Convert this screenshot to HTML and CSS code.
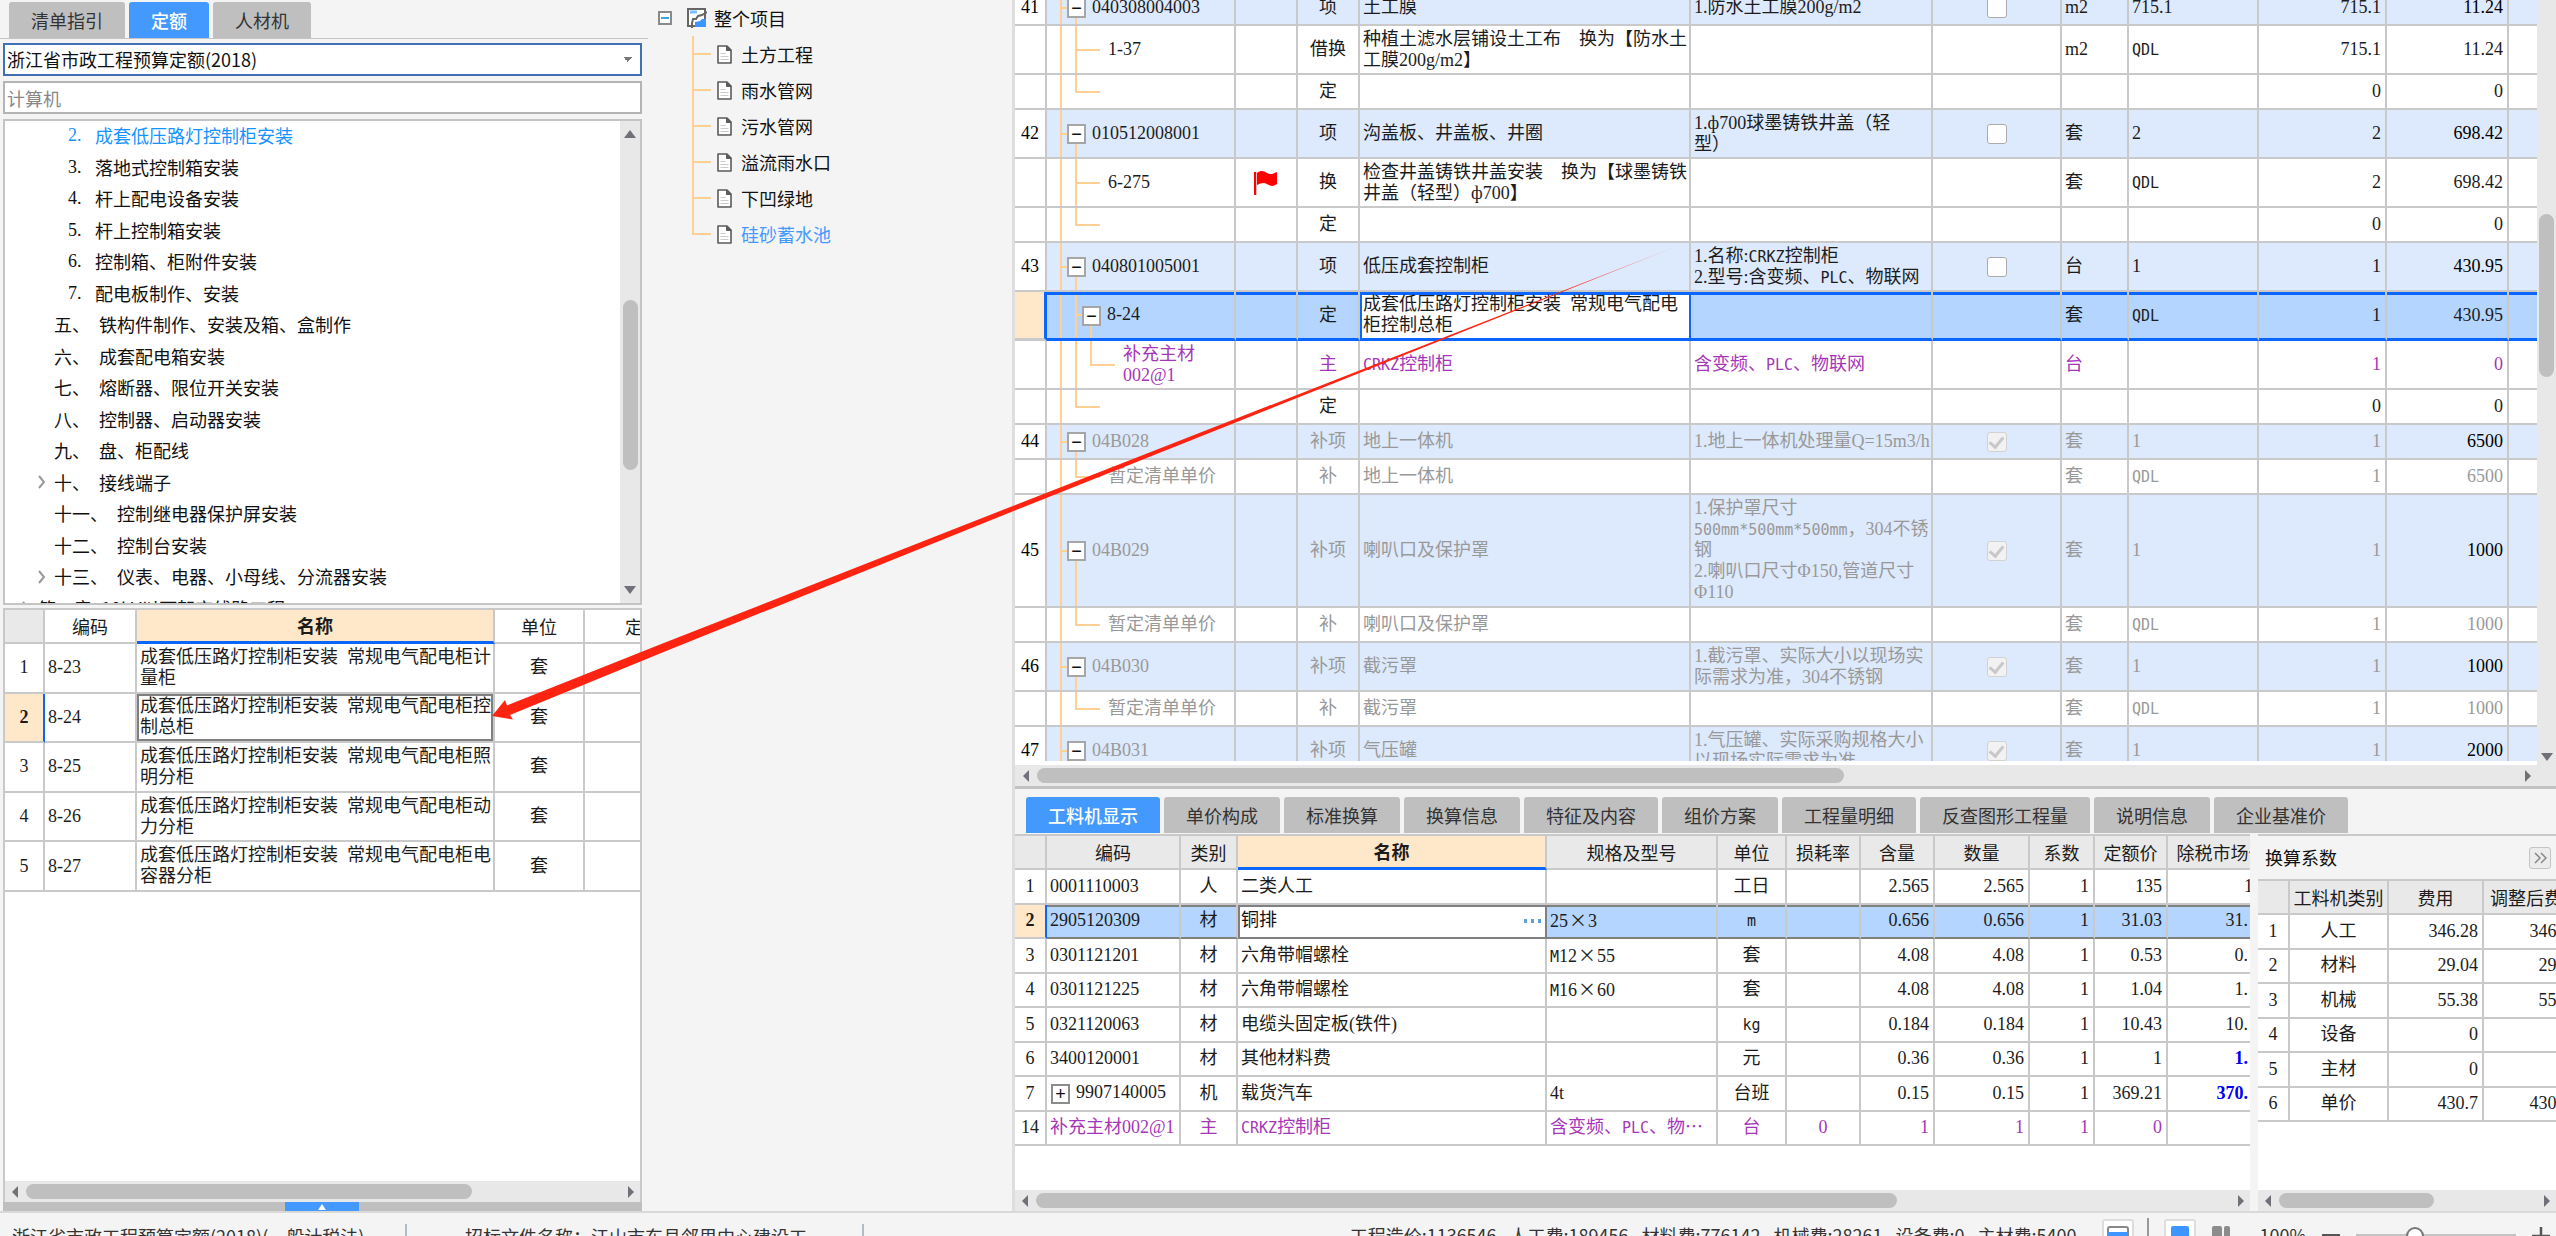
FILE: index.html
```html
<!DOCTYPE html>
<html lang="zh-CN">
<head>
<meta charset="utf-8">
<title>工程计价</title>
<link rel="stylesheet" href="styles.css">
</head>
<body>
<svg class="defs" aria-hidden="true">
  <symbol id="doc" viewBox="0 0 15 19"><path d="M1 1h9l4 4v13H1z" fill="#fff" stroke="#5a5a5a" stroke-width="1.6" stroke-linejoin="round"/><path d="M9.5 1v4.5H14z" fill="#5a5a5a" stroke="#5a5a5a"/><path d="M3.500 8.500h5M3.500 11.500h8M3.500 14.500h8" stroke="#ccc"/></symbol>
  <symbol id="chev" viewBox="0 0 8 14"><path d="M1 1l5 6-5 6" fill="none" stroke="#999" stroke-width="2"/></symbol>
</svg>
<div class="app">
  <aside class="quota">
    <nav class="tabs quota-tabs"><button>清单指引</button><button class="on">定额</button><button>人材机</button></nav>
    <select class="lib" aria-label="定额库"><option>浙江省市政工程预算定额(2018)</option></select>
    <input class="find" type="text" aria-label="搜索" placeholder="计算机">
    <div class="tree">
      <ul>
        <li class="d3 cur"><b>2.</b>成套低压路灯控制柜安装</li>
        <li class="d3"><b>3.</b>落地式控制箱安装</li>
        <li class="d3"><b>4.</b>杆上配电设备安装</li>
        <li class="d3"><b>5.</b>杆上控制箱安装</li>
        <li class="d3"><b>6.</b>控制箱、柜附件安装</li>
        <li class="d3"><b>7.</b>配电板制作、安装</li>
        <li class="d2"><b>五、</b>铁构件制作、安装及箱、盒制作</li>
        <li class="d2"><b>六、</b>成套配电箱安装</li>
        <li class="d2"><b>七、</b>熔断器、限位开关安装</li>
        <li class="d2"><b>八、</b>控制器、启动器安装</li>
        <li class="d2"><b>九、</b>盘、柜配线</li>
        <li class="d2 open"><svg><use href="#chev"/></svg><b>十、</b>接线端子</li>
        <li class="d2"><b>十一、</b>控制继电器保护屏安装</li>
        <li class="d2"><b>十二、</b>控制台安装</li>
        <li class="d2 open"><svg><use href="#chev"/></svg><b>十三、</b>仪表、电器、小母线、分流器安装</li>
        <li class="d1 open"><svg><use href="#chev"/></svg><b>第二章</b>10kV以下架空线路工程</li>
      </ul>
      <div class="vbar"><i class="up"></i><span class="s1"></span><i class="thumb t1"></i><span class="grow"></span><i class="down"></i></div>
    </div>
    <div class="items">
      <table class="grid g-items">
        <colgroup><col class="w40"><col class="w92"><col class="w358"><col class="w90"><col></colgroup>
        <thead><tr><th class="corner"></th><th>编码</th><th class="act">名称</th><th>单位</th><th class="cut">定额</th></tr></thead>
        <tbody>
        <tr><td class="c">1</td><td>8-23</td><td>成套低压路灯控制柜安装&nbsp; 常规电气配电柜计<br>量柜</td><td class="c">套</td><td></td></tr>
        <tr class="cur"><td class="c no">2</td><td>8-24</td><td class="edit">成套低压路灯控制柜安装&nbsp; 常规电气配电柜控<br>制总柜</td><td class="c">套</td><td></td></tr>
        <tr><td class="c">3</td><td>8-25</td><td>成套低压路灯控制柜安装&nbsp; 常规电气配电柜照<br>明分柜</td><td class="c">套</td><td></td></tr>
        <tr><td class="c">4</td><td>8-26</td><td>成套低压路灯控制柜安装&nbsp; 常规电气配电柜动<br>力分柜</td><td class="c">套</td><td></td></tr>
        <tr><td class="c">5</td><td>8-27</td><td>成套低压路灯控制柜安装&nbsp; 常规电气配电柜电<br>容器分柜</td><td class="c">套</td><td></td></tr>
        </tbody>
      </table>
      <div class="fill"></div>
      <div class="hbar"><i class="left"></i><i class="thumb" style="width:446px"></i><span class="grow"></span><i class="right"></i></div>
    </div>
    <div class="handle"><button aria-label="展开"><i></i></button></div>
  </aside>

  <aside class="project">
    <div class="root"><button class="fold" aria-label="折叠"></button>
      <svg width="20" height="20" viewBox="0 0 20 20"><path d="M1 1h17v17H1z" fill="#fff" stroke="#666" stroke-width="2"/><path d="M3 4h7" stroke="#7cbcff" stroke-width="3"/><path d="M20 4l-5 3-4 1-2 3H6l-1 4v5" fill="none" stroke="#666" stroke-width="2"/><path d="M8 19v-5l5-1 2-2h4v8z" fill="#3d96ff"/></svg>
      整个项目</div>
    <ul>
      <li><svg><use href="#doc"/></svg>土方工程</li>
      <li><svg><use href="#doc"/></svg>雨水管网</li>
      <li><svg><use href="#doc"/></svg>污水管网</li>
      <li><svg><use href="#doc"/></svg>溢流雨水口</li>
      <li><svg><use href="#doc"/></svg>下凹绿地</li>
      <li class="cur"><svg><use href="#doc"/></svg>硅砂蓄水池</li>
    </ul>
  </aside>

  <main class="work">
    <section class="bill">
      <div class="bill-row">
        <div class="bill-view">
          <table class="grid g-bill">
            <colgroup><col class="w32"><col class="w189"><col class="w62"><col class="w62"><col class="w331"><col class="w242"><col class="w129"><col class="w67"><col class="w130"><col class="w128"><col class="w122"><col></colgroup>
            <tbody>
            <tr class="h1 item"><td class="no">41</td><td class="top"><button class="tg">−</button>040308004003</td><td></td><td class="c">项</td><td>土工膜</td><td>1.防水土工膜200g/m2</td><td class="c"><input type="checkbox" aria-label="选择"></td><td>m2</td><td>715.1</td><td class="r">715.1</td><td class="r bk">11.24</td><td></td></tr>
            <tr class="h2"><td></td><td class="mid">1-37</td><td></td><td class="c">借换</td><td>种植土滤水层铺设土工布　换为【防水土<br>工膜200g/m2】</td><td></td><td></td><td>m2</td><td><span class="m">QDL</span></td><td class="r">715.1</td><td class="r">11.24</td><td></td></tr>
            <tr class="h1"><td></td><td class="end"></td><td></td><td class="c">定</td><td></td><td></td><td></td><td></td><td></td><td class="r">0</td><td class="r">0</td><td></td></tr>
            <tr class="h2 item"><td class="no">42</td><td class="top"><button class="tg">−</button>010512008001</td><td></td><td class="c">项</td><td>沟盖板、井盖板、井圈</td><td>1.ф700球墨铸铁井盖（轻<br>型）</td><td class="c"><input type="checkbox" aria-label="选择"></td><td>套</td><td>2</td><td class="r">2</td><td class="r bk">698.42</td><td></td></tr>
            <tr class="h2"><td></td><td class="mid">6-275</td><td class="c"><svg class="flag" width="24" height="26" viewBox="0 0 24 26"><path d="M1 2v23" stroke="#f00" stroke-width="2.500"/><path d="M3 3c4-3 7-2 10 0s6 1 10-1v12c-4 3-7 2-10 0s-6-1-10 1z" fill="#f00"/></svg></td><td class="c">换</td><td>检查井盖铸铁井盖安装　换为【球墨铸铁<br>井盖（轻型）ф700】</td><td></td><td></td><td>套</td><td><span class="m">QDL</span></td><td class="r">2</td><td class="r">698.42</td><td></td></tr>
            <tr class="h1"><td></td><td class="end"></td><td></td><td class="c">定</td><td></td><td></td><td></td><td></td><td></td><td class="r">0</td><td class="r">0</td><td></td></tr>
            <tr class="h2 item"><td class="no">43</td><td class="top"><button class="tg">−</button>040801005001</td><td></td><td class="c">项</td><td>低压成套控制柜</td><td>1.名称:<span class="m">CRKZ</span>控制柜<br>2.型号:含变频、<span class="m">PLC</span>、物联网</td><td class="c"><input type="checkbox" aria-label="选择"></td><td>台</td><td>1</td><td class="r">1</td><td class="r bk">430.95</td><td></td></tr>
            <tr class="h2 sel"><td></td><td class="sub"><button class="tg">−</button>8-24</td><td></td><td class="c">定</td><td class="edit">成套低压路灯控制柜安装&nbsp; 常规电气配电<br>柜控制总柜</td><td></td><td></td><td>套</td><td><span class="m">QDL</span></td><td class="r">1</td><td class="r">430.95</td><td></td></tr>
            <tr class="h2 main"><td></td><td class="leaf">补充主材<br>002@1</td><td></td><td class="c">主</td><td><span class="m">CRKZ</span>控制柜</td><td>含变频、<span class="m">PLC</span>、物联网</td><td></td><td>台</td><td></td><td class="r">1</td><td class="r">0</td><td></td></tr>
            <tr class="h1"><td></td><td class="end"></td><td></td><td class="c">定</td><td></td><td></td><td></td><td></td><td></td><td class="r">0</td><td class="r">0</td><td></td></tr>
            <tr class="h1 item off"><td class="no">44</td><td class="top"><button class="tg">−</button>04B028</td><td></td><td class="c">补项</td><td>地上一体机</td><td>1.地上一体机处理量Q=15m3/h</td><td class="c"><input type="checkbox" aria-label="选择" checked disabled></td><td>套</td><td>1</td><td class="r">1</td><td class="r bk">6500</td><td></td></tr>
            <tr class="h1 off"><td></td><td class="end">暂定清单单价</td><td></td><td class="c">补</td><td>地上一体机</td><td></td><td></td><td>套</td><td><span class="m">QDL</span></td><td class="r">1</td><td class="r">6500</td><td></td></tr>
            <tr class="h5 item off"><td class="no">45</td><td class="top"><button class="tg">−</button>04B029</td><td></td><td class="c">补项</td><td>喇叭口及保护罩</td><td>1.保护罩尺寸<br><span class="m">500mm*500mm*500mm</span>，304不锈<br>钢<br>2.喇叭口尺寸Φ150,管道尺寸<br>Φ110</td><td class="c"><input type="checkbox" aria-label="选择" checked disabled></td><td>套</td><td>1</td><td class="r">1</td><td class="r bk">1000</td><td></td></tr>
            <tr class="h1 off"><td></td><td class="end">暂定清单单价</td><td></td><td class="c">补</td><td>喇叭口及保护罩</td><td></td><td></td><td>套</td><td><span class="m">QDL</span></td><td class="r">1</td><td class="r">1000</td><td></td></tr>
            <tr class="h2 item off"><td class="no">46</td><td class="top"><button class="tg">−</button>04B030</td><td></td><td class="c">补项</td><td>截污罩</td><td>1.截污罩、实际大小以现场实<br>际需求为准，304不锈钢</td><td class="c"><input type="checkbox" aria-label="选择" checked disabled></td><td>套</td><td>1</td><td class="r">1</td><td class="r bk">1000</td><td></td></tr>
            <tr class="h1 off"><td></td><td class="end">暂定清单单价</td><td></td><td class="c">补</td><td>截污罩</td><td></td><td></td><td>套</td><td><span class="m">QDL</span></td><td class="r">1</td><td class="r">1000</td><td></td></tr>
            <tr class="h2 item off"><td class="no">47</td><td class="top"><button class="tg">−</button>04B031</td><td></td><td class="c">补项</td><td>气压罐</td><td>1.气压罐、实际采购规格大小<br>以现场实际需求为准</td><td class="c"><input type="checkbox" aria-label="选择" checked disabled></td><td>套</td><td>1</td><td class="r">1</td><td class="r bk">2000</td><td></td></tr>
            </tbody>
          </table>
        </div>
        <div class="vbar bill-bar"><span class="s2"></span><i class="thumb t2"></i><span class="grow"></span><i class="down"></i></div>
      </div>
      <div class="hbar bill-h"><i class="left"></i><i class="thumb" style="width:807px"></i><span class="grow"></span><i class="right"></i></div>
    </section>

    <section class="detail">
      <nav class="tabs detail-tabs"><button class="on">工料机显示</button><button>单价构成</button><button>标准换算</button><button>换算信息</button><button>特征及内容</button><button>组价方案</button><button>工程量明细</button><button>反查图形工程量</button><button>说明信息</button><button>企业基准价</button></nav>
      <div class="panes">
        <div class="pane res">
          <div class="clip">
          <table class="grid g-res">
            <colgroup><col class="w32"><col class="w134"><col class="w57"><col class="w309"><col class="w171"><col class="w69"><col class="w74"><col class="w74"><col class="w95"><col class="w65"><col class="w73"><col class="w109"></colgroup>
            <thead><tr><th></th><th>编码</th><th>类别</th><th class="act">名称</th><th>规格及型号</th><th>单位</th><th>损耗率</th><th>含量</th><th>数量</th><th>系数</th><th>定额价</th><th>除税市场价</th></tr></thead>
            <tbody>
            <tr><td class="c">1</td><td>0001110003</td><td class="c">人</td><td>二类人工</td><td></td><td class="c">工日</td><td></td><td class="r">2.565</td><td class="r">2.565</td><td class="r">1</td><td class="r">135</td><td class="r">135</td></tr>
            <tr class="cur"><td class="c no">2</td><td>2905120309</td><td class="c">材</td><td class="edit"><div class="pick">铜排<button aria-label="更多"><svg width="17" height="4" viewBox="0 0 17 4"><path d="M0 0h3v4H0zM7 0h3v4H7zM14 0h3v4h-3z" fill="#5aa0da"/></svg></button></div></td><td>25<span class="x">×</span>3</td><td class="c"><span class="m">m</span></td><td></td><td class="r">0.656</td><td class="r">0.656</td><td class="r">1</td><td class="r">31.03</td><td class="r p">31.</td></tr>
            <tr><td class="c">3</td><td>0301121201</td><td class="c">材</td><td>六角带帽螺栓</td><td><span class="m">M</span>12<span class="x">×</span>55</td><td class="c">套</td><td></td><td class="r">4.08</td><td class="r">4.08</td><td class="r">1</td><td class="r">0.53</td><td class="r p">0.</td></tr>
            <tr><td class="c">4</td><td>0301121225</td><td class="c">材</td><td>六角带帽螺栓</td><td><span class="m">M</span>16<span class="x">×</span>60</td><td class="c">套</td><td></td><td class="r">4.08</td><td class="r">4.08</td><td class="r">1</td><td class="r">1.04</td><td class="r p">1.</td></tr>
            <tr><td class="c">5</td><td>0321120063</td><td class="c">材</td><td>电缆头固定板(铁件)</td><td></td><td class="c"><span class="m">kg</span></td><td></td><td class="r">0.184</td><td class="r">0.184</td><td class="r">1</td><td class="r">10.43</td><td class="r p">10.</td></tr>
            <tr><td class="c">6</td><td>3400120001</td><td class="c">材</td><td>其他材料费</td><td></td><td class="c">元</td><td></td><td class="r">0.36</td><td class="r">0.36</td><td class="r">1</td><td class="r">1</td><td class="r p blue">1.</td></tr>
            <tr><td class="c">7</td><td><button class="tg plus">+</button>9907140005</td><td class="c">机</td><td>载货汽车</td><td>4t</td><td class="c">台班</td><td></td><td class="r">0.15</td><td class="r">0.15</td><td class="r">1</td><td class="r">369.21</td><td class="r p blue">370.</td></tr>
            <tr class="main"><td class="c no">14</td><td>补充主材002@1</td><td class="c">主</td><td><span class="m">CRKZ</span>控制柜</td><td>含变频、<span class="m">PLC</span>、物⋯</td><td class="c">台</td><td class="c">0</td><td class="r">1</td><td class="r">1</td><td class="r">1</td><td class="r">0</td><td></td></tr>
            </tbody>
          </table>
          </div>
          <div class="hbar"><i class="left"></i><i class="thumb" style="width:861px"></i><span class="grow"></span><i class="right"></i></div>
        </div>
        <div class="pane coef">
          <div class="coef-head">换算系数<button aria-label="收起"><svg width="13" height="12" viewBox="0 0 13 12"><path d="M1 1l5 5-5 5M7 1l5 5-5 5" fill="none" stroke="#888" stroke-width="1.500"/></svg></button></div>
          <div class="clip">
          <table class="grid g-coef">
            <colgroup><col class="w32"><col class="w99"><col class="w95"><col class="w104"></colgroup>
            <thead><tr><th></th><th>工料机类别</th><th>费用</th><th>调整后费用</th></tr></thead>
            <tbody>
            <tr><td class="c">1</td><td class="c">人工</td><td class="r">346.28</td><td class="r p">346.</td></tr>
            <tr><td class="c">2</td><td class="c">材料</td><td class="r">29.04</td><td class="r p">29.</td></tr>
            <tr><td class="c">3</td><td class="c">机械</td><td class="r">55.38</td><td class="r p">55.</td></tr>
            <tr><td class="c">4</td><td class="c">设备</td><td class="r">0</td><td></td></tr>
            <tr><td class="c">5</td><td class="c">主材</td><td class="r">0</td><td></td></tr>
            <tr><td class="c">6</td><td class="c">单价</td><td class="r">430.7</td><td class="r p">430.</td></tr>
            </tbody>
          </table>
          </div>
          <div class="hbar"><i class="left"></i><i class="thumb" style="width:155px"></i><span class="grow"></span><i class="right"></i></div>
        </div>
      </div>
    </section>
  </main>
</div>
<footer class="status">
  <div class="status-in">
    <span class="s-lib">浙江省市政工程预算定额(2018)(一般计税法)</span>
    <span class="s-file">招标文件名称：江山市东县邻里中心建设工</span>
    <span class="s-sum"><span>工程造价:1136546</span><span>人工费:189456</span><span>材料费:776142</span><span>机械费:28261</span><span>设备费:0</span><span>主材费:5400</span></span>
    <button class="view" aria-label="窗口"><svg width="22" height="20" viewBox="0 0 22 20"><rect x="1" y="1" width="20" height="18" rx="2" fill="#fff" stroke="#888" stroke-width="2"/><path d="M1 6h20v14H1z" fill="#3d96ff"/></svg></button>
    <span class="rule"></span>
    <button class="view" aria-label="单页"><svg width="18" height="20" viewBox="0 0 18 20"><rect width="18" height="20" rx="2" fill="#3d96ff"/></svg></button>
    <button class="view flat" aria-label="双页"><svg width="18" height="20" viewBox="0 0 18 20"><rect width="10" height="20" rx="2" fill="#8c8c8c"/><rect x="12" width="6" height="20" rx="2" fill="#8c8c8c"/></svg></button>
    <span class="pct">100%</span>
    <button class="zb" aria-label="缩小"><svg width="18" height="18" viewBox="0 0 18 18"><path d="M0 9h18" stroke="#555" stroke-width="4"/></svg></button>
    <input class="zoom" type="range" min="0" max="100" value="35" aria-label="缩放">
    <button class="zb" aria-label="放大"><svg width="18" height="18" viewBox="0 0 18 18"><path d="M0 9h18M9 0v18" stroke="#555" stroke-width="2.500"/></svg></button>
  </div>
</footer>
<svg class="arrow" viewBox="0 0 2556 1236" preserveAspectRatio="none" aria-hidden="true">
  <defs><linearGradient id="fade" gradientUnits="userSpaceOnUse" x1="1560" y1="0" x2="1680" y2="0"><stop offset="0" stop-color="#ff2412"/><stop offset="1" stop-color="#ff2412" stop-opacity=".25"/></linearGradient></defs>
  <path d="M492 716L505 700L507 705.500L660 644.500L1000 511L1680 245L1000 516.500L660 653.500L510 715L513 719.500Z" fill="url(#fade)"/>
</svg>
</body>
</html>
```
FILE: styles.css
```css
* { box-sizing: border-box; }
:root {
  --line: #c9c9c9;
  --blue: #0a66ff;
  --guide: linear-gradient(#ffd092, #ffd092);
  --ui: "Noto Sans CJK SC", sans-serif;
  --song: "Liberation Serif", "Noto Sans CJK SC", serif;
}
body {
  margin: 0;
  height: 100vh;
  overflow: hidden;
  position: relative;
  display: flex;
  flex-direction: column;
  background: #f4f4f4;
  color: #1c1c1c;
  font: 18px/21px var(--song);
}
ul { margin: 0; padding: 0; list-style: none; }
button { font: inherit; color: inherit; border: 0; padding: 0; background: none; }
.defs { display: none; }
.app { flex: 1; min-height: 0; display: grid; grid-template-columns: 642px 373px minmax(0, 1fr); }

/* tabs */
.tabs { display: flex; gap: 4px; font-family: var(--ui); }
.tabs button { height: 36px; padding: 0 22px; background: #bfbfbf; color: #333; border-radius: 3px 3px 0 0; white-space: nowrap; }
.tabs .on { background: #4499ff; color: #fff; font-weight: 500; }
.quota-tabs { padding: 2px 9px 0; border-bottom: 1px solid #c4c4c4; margin: 0 -6px 0 0; }

/* left panel */
.quota { display: flex; flex-direction: column; min-height: 0; }
.lib, .find { margin-left: 3px; height: 33px; border: 2px solid #b4b4b4; background: #fff; padding: 0 2px; font: 18px/21px var(--ui); color: #111; flex: none; }
.lib {
  margin-top: 4px; border-color: #4270b4; appearance: none;
  background: linear-gradient(45deg, transparent 50%, #777 50%) right 12px center/5px 5px no-repeat, linear-gradient(-45deg, transparent 50%, #777 50%) right 7px center/5px 5px no-repeat, #fff;
}
.find { margin-top: 5px; }
.find::placeholder { color: #888; opacity: 1; }
.tree { flex: 1; min-height: 0; margin: 5px 0 0 3px; border: 2px solid #c4c4c4; background: #fff; display: flex; overflow: hidden; }
.tree ul { flex: 1; height: 504px; margin-top: -1px; display: grid; grid-template-rows: repeat(16, 1fr); font-family: var(--ui); color: #111; }
.tree li { display: flex; align-items: center; white-space: nowrap; }
.tree b { font-weight: 400; margin-right: 9px; }
.tree svg { width: 8px; height: 14px; margin-right: 8px; flex: none; }
.tree .d3 { padding-left: 63px; }
.tree .d3 b { width: 18px; font-family: var(--song); }
.tree .d2 { padding-left: 49px; }
.tree .d2.open { padding-left: 33px; }
.tree .d1.open { padding-left: 17px; }
.tree .cur { color: #1593ff; }
.items { flex: 0 0 594px; margin: 3px 0 0 3px; border-left: 2px solid var(--line); border-top: 2px solid var(--line); border-right: 2px solid var(--line); background: #fff; display: flex; flex-direction: column; }
.fill { flex: 1; }
.handle { height: 9px; margin-left: 3px; background: #bfbfbf; display: flex; justify-content: center; }
.handle button { width: 74px; margin-left: -2px; background: #4499ff; display: flex; justify-content: center; align-items: center; }
.handle i { border: 4px solid transparent; border-bottom: 6px solid #fff; border-top: 0; }

/* scroll bars */
.vbar { width: 20px; background: #e8e8e8; display: flex; flex-direction: column; align-items: center; padding: 9px 0; flex: none; }
.hbar { height: 21px; background: #e8e8e8; display: flex; align-items: center; padding: 0 6px 0 7px; flex: none; gap: 8px; }
.grow { flex: 1; }
.thumb { background: #bfbfbf; border-radius: 8px; }
.hbar .thumb { height: 15px; }
.vbar .thumb { width: 15px; }
.s1 { height: 162px; }
.t1 { height: 170px; }
.s2 { height: 205px; }
.t2 { height: 163px; }
.up, .down, .left, .right { border: 6px solid transparent; width: 0; height: 0; }
.up { border-top: 0; border-bottom: 8px solid #707078; }
.down { border-bottom: 0; border-top: 8px solid #707078; }
.left { border-left: 0; border-right: 6px solid #707078; }
.right { border-right: 0; border-left: 6px solid #707078; }

/* grids */
.grid { width: 100%; border-collapse: separate; border-spacing: 0; table-layout: fixed; background: #fff; }
.grid td, .grid th { padding: 0 4px 0 3px; border-right: 2px solid var(--line); border-bottom: 2px solid var(--line); white-space: nowrap; overflow: hidden; font-weight: 400; }
.grid th { font-family: var(--ui); padding: 0; background: #e9e9e9; text-align: center; }
.grid .act { background: #ffe7c9; font-weight: 700; border-bottom: 3px solid var(--blue); }
.grid .c, .grid .no { text-align: center; padding: 0; }
.grid .r { text-align: right; }
.grid .p { padding-right: 27px; }
.grid .blue { color: #0000f5; font-weight: 700; }
.bk { color: #000; }
.m { font-family: "DejaVu Sans Mono", monospace; font-size: 15px; line-height: 1; }
.x { font-family: var(--ui); padding: 0 1px; }
.main td { color: #a636b8; }
.main td.no { color: #222; }
.w32 { width: 32px; } .w40 { width: 40px; } .w57 { width: 57px; } .w62 { width: 62px; } .w65 { width: 65px; }
.w67 { width: 67px; } .w69 { width: 69px; } .w73 { width: 73px; } .w74 { width: 74px; } .w90 { width: 90px; }
.w92 { width: 92px; } .w95 { width: 95px; } .w99 { width: 99px; } .w104 { width: 104px; } .w109 { width: 109px; }
.w122 { width: 122px; } .w128 { width: 128px; } .w129 { width: 129px; } .w130 { width: 130px; } .w134 { width: 134px; }
.w171 { width: 171px; } .w189 { width: 189px; } .w242 { width: 242px; } .w309 { width: 309px; } .w331 { width: 331px; } .w358 { width: 358px; }

.g-items { height: 282px; }
.g-items th { background: #fff; height: 34px; }
.g-items th.corner { background: #e9e9e9; }
.g-items th.act { background: #ffe7c9; }
.g-items th.cut { text-align: left; padding-left: 40px; }
.g-items td:last-child, .g-items th:last-child { border-right: 0; }
.cur .no { background: #ffe7c9; font-weight: 700; border-right-color: var(--blue); }
.g-items .edit { box-shadow: 0 0 0 2px #808080 inset; }

/* bill table */
.work { display: flex; flex-direction: column; min-height: 0; }
.bill { flex: 1; min-height: 0; display: flex; flex-direction: column; border-bottom: 3px solid #c2c2c2; }
.bill-row { flex: 1; min-height: 0; display: flex; }
.bill-view { flex: 1; min-width: 0; overflow: hidden; border-bottom: 4px solid #fff; }
.g-bill { margin-top: -9px; }
.g-bill td:last-child { border-right: 0; }
.h1 td { height: 35px; }
.h2 td { height: 49px; }
.h5 td { height: 113px; }
.item td { background-color: #dde9fd; }
.item td.no { background: #fff; color: #000; }
.off td { color: #999; }
.off td.bk { color: #000; }
.g-bill .top { padding-left: 20px; background-image: var(--guide), var(--guide), var(--guide); background-repeat: no-repeat; background-position: 13px 0, 13px 50%, 28px 100%; background-size: 2px 100%, 8px 2px, 2px 50%; }
.g-bill .mid { padding-left: 61px; background: var(--guide) 13px 0/2px 100% no-repeat, var(--guide) 28px 0/2px 100% no-repeat, var(--guide) 28px 50%/25px 2px no-repeat; }
.g-bill .end { padding-left: 61px; background: var(--guide) 13px 0/2px 100% no-repeat, var(--guide) 28px 0/2px 50% no-repeat, var(--guide) 28px 50%/25px 2px no-repeat; }
.g-bill .leaf { padding-left: 76px; background: var(--guide) 13px 0/2px 100% no-repeat, var(--guide) 28px 0/2px 100% no-repeat, var(--guide) 43px 0/2px 50% no-repeat, var(--guide) 43px 50%/25px 2px no-repeat; }
.g-bill .sub { padding-left: 35px; background-image: var(--guide), var(--guide), var(--guide), var(--guide); background-repeat: no-repeat; background-position: 13px 0, 28px 0, 28px 50%, 43px 100%; background-size: 2px 100%, 2px 100%, 8px 2px, 2px 50%; }
.sel td { background-color: #b3d5ff; border-bottom: 3px solid var(--blue); box-shadow: 0 3px 0 var(--blue) inset; }
.sel td:first-child { background: #ffe7c9; border-bottom-color: var(--line); border-right: 3px solid var(--blue); box-shadow: none; }
.sel .edit { background: #fff; border-right-color: var(--blue); box-shadow: 2px 3px 0 var(--blue) inset; }
.tg { width: 19px; height: 20px; margin-right: 6px; border: 2px solid #a6a6a6; background: #fff; color: #111; font: 18px/14px "Liberation Sans", sans-serif; vertical-align: middle; }
.tg.plus { margin-left: 1px; border-color: #8c8c8c; }
.flag { vertical-align: middle; }
input[type=checkbox] { appearance: none; width: 20px; height: 20px; margin: 0; border: 1px solid #ababab; border-radius: 3px; background: #fff; vertical-align: middle; display: inline-grid; place-items: center; }
input[type=checkbox]:disabled { background: #f2f2f2; border-color: #d2d2d2; }
input[type=checkbox]:checked::after { content: ""; width: 6px; height: 11px; margin-top: -3px; border: solid #c8c8c8; border-width: 0 3px 3px 0; rotate: 40deg; }
.bill-bar { width: 19px; padding-bottom: 4px; }
.bill-h { padding-right: 25px; padding-left: 8px; }

/* detail */
.detail { flex: 0 0 422px; display: flex; flex-direction: column; padding-top: 8px; }
.detail-tabs { padding: 0 11px; margin-bottom: 1px; }
.panes { flex: 1; min-height: 0; display: grid; grid-template-columns: minmax(0, 1fr) 298px; gap: 8px; }
.pane { display: flex; flex-direction: column; min-width: 0; min-height: 0; background: #fff; }
.res, .coef { border-top: 2px solid var(--line); }
.clip { flex: 1; min-width: 0; min-height: 0; overflow: hidden; }
.g-res { width: 1262px; height: 310px; }
.g-res th, .g-coef th { height: 34px; }
.g-res td, .g-coef td { height: 34px; }
.g-res .cur td { background: #b3d5ff; border-bottom-color: #808080; box-shadow: 0 2px 0 #808080 inset; }
.g-res .cur .no { background: #ffe7c9; border-bottom-color: var(--line); box-shadow: none; }
.g-res .cur .edit { background: #fff; border-right-color: #808080; box-shadow: 2px 2px 0 #808080 inset; }
.pick { display: flex; justify-content: space-between; align-items: center; color: #111; }
.pick button { display: grid; }
.coef-head { height: 43px; padding: 0 5px 0 7px; background: #f4f4f4; display: flex; justify-content: space-between; align-items: center; font-family: var(--ui); color: #111; flex: none; }
.coef-head button { width: 22px; height: 22px; border: 1px solid #c4c4c4; border-radius: 3px; background: #ececec; display: grid; place-items: center; }
.g-coef { width: 330px; height: 243px; border-top: 2px solid var(--line); }
.g-coef .p { padding-right: 25px; }

/* project tree */
.project { border-right: 3px solid #dedede; font-family: var(--ui); color: #111; }
.root { display: flex; align-items: center; height: 36px; padding-left: 16px; }
.root svg { margin: 0 7px 0 15px; }
.fold { width: 14px; height: 14px; border: 2px solid #8a8a8a; background: linear-gradient(#37a8d8, #37a8d8) center/8px 2px no-repeat #fff; }
.project ul { margin-left: 50px; background: var(--guide) 0 0/2px 199px no-repeat; }
.project li { display: flex; align-items: center; height: 36px; padding-left: 25px; background: var(--guide) 0 50%/19px 2px no-repeat; }
.project li svg { width: 15px; height: 19px; margin-right: 9px; }
.project .cur { color: #4499ff; }

/* status bar */
.status { height: 25px; flex: none; overflow: hidden; border-top: 2px solid #d9d9d9; font-family: var(--ui); color: #333; }
.status-in { height: 45px; display: flex; align-items: center; white-space: nowrap; padding-right: 6px; }
.s-lib { width: 407px; padding-left: 12px; border-right: 2px solid #b3bac4; line-height: 24px; }
.s-file { width: 457px; padding-left: 58px; border-right: 2px solid #b3bac4; line-height: 24px; }
.s-sum { display: flex; gap: 13px; margin-left: auto; }
.view { width: 32px; height: 34px; margin-left: 26px; border: 2px solid #ddd; border-radius: 3px; background: #fff; display: grid; place-items: center; }
.view.flat { border: 0; background: none; width: 18px; margin-left: 16px; }
.rule { width: 2px; height: 36px; background: #999; margin-left: 13px; }
.rule + .view { margin-left: 15px; }
.pct { margin-left: 29px; }
.zb { margin-left: 16px; width: 18px; height: 18px; display: grid; }
.zoom { appearance: none; width: 160px; height: 20px; margin: 0 0 0 16px; background: linear-gradient(#c4c4c4, #c4c4c4) center/100% 3px no-repeat; }
.zoom::-webkit-slider-thumb { appearance: none; width: 18px; height: 18px; border: 2px solid #777; border-radius: 50%; background: #fff; }

.arrow { position: absolute; inset: 0; width: 100%; height: 100%; pointer-events: none; }
```
